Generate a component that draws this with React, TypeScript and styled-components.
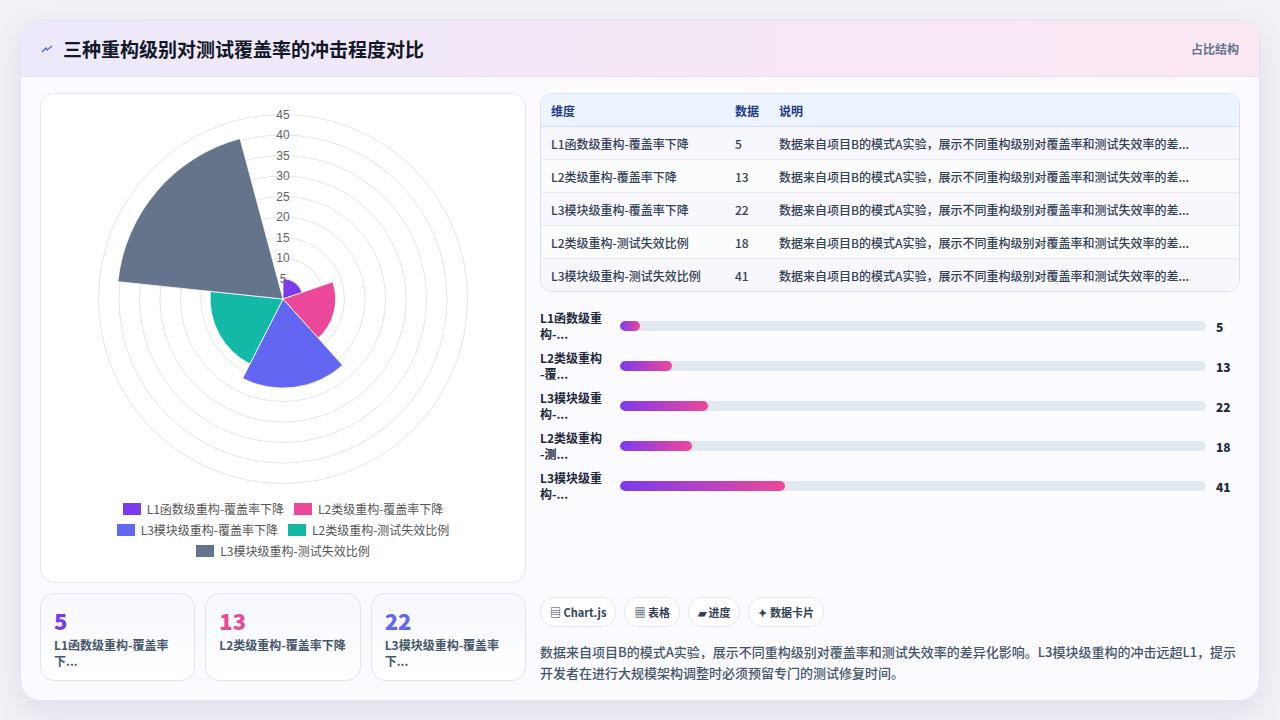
import React from "react";
import styled, {createGlobalStyle} from "styled-components";

const items = [
    {name: "L1函数级重构-覆盖率下降", short: "L1函数级重构-...", value: 5, color: "#7c3aed", from: -90, to: -19},
    {name: "L2类级重构-覆盖率下降", short: "L2类级重构-覆...", value: 13, color: "#ec4899", from: -19, to: 48},
    {name: "L3模块级重构-覆盖率下降", short: "L3模块级重构-...", value: 22, color: "#6366f1", from: 48, to: 117},
    {name: "L2类级重构-测试失效比例", short: "L2类级重构-测...", value: 18, color: "#14b8a6", from: 117, to: 186},
    {name: "L3模块级重构-测试失效比例", short: "L3模块级重构-...", value: 41, color: "#64748b", from: 186, to: 255},
];
const note = "数据来自项目B的模式A实验，展示不同重构级别对覆盖率和测试失效率的差...";

const GlobalStyle = createGlobalStyle`
    body {
        margin: 0;
        background: #f1f1f6;
        font-family: "Noto Sans CJK SC", "Noto Sans", sans-serif;
    }
`;

const Page = styled.div`
    width: 1280px;
    height: 720px;
    padding: 20px;
    box-sizing: border-box;
`;

const Card = styled.div`
    height: 679px;
    background: #fafaff;
    border: 1px solid #e4e2f3;
    border-radius: 20px;
    box-shadow: 0 10px 30px rgba(100, 100, 160, 0.12);
    overflow: hidden;
    display: flex;
    flex-direction: column;
`;

const Header = styled.div`
    height: 55px;
    flex: none;
    display: flex;
    align-items: center;
    justify-content: space-between;
    padding: 0 20px;
    background: linear-gradient(to right, #ede9fa, #fbe7f3);
    border-bottom: 1px solid #e7e3f5;
`;

const Title = styled.h1`
    margin: 0;
    font-size: 19px;
    font-weight: 700;
    color: #111827;
    display: flex;
    align-items: center;
    gap: 10px;
`;

const HeaderTag = styled.span`
    font-size: 12px;
    font-weight: 700;
    color: #64748b;
`;

const Body = styled.div`
    flex: 1;
    display: grid;
    grid-template-columns: 486px 1fr;
    gap: 14px;
    padding: 16px 19px 17px;
`;

const Column = styled.div`
    display: flex;
    flex-direction: column;
    gap: 10px;
    min-width: 0;
`;

const ChartBox = styled.div`
    height: 488px;
    background: #fff;
    border: 1px solid #e2e8f0;
    border-radius: 14px;
    display: flex;
    flex-direction: column;
    align-items: center;
`;

const Legend = styled.div`
    display: flex;
    flex-wrap: wrap;
    justify-content: center;
    gap: 4px 10px;
    width: 360px;
    margin-top: 6px;
`;

const LegendItem = styled.span`
    display: flex;
    align-items: center;
    gap: 6px;
    font-size: 12px;
    color: #555;
`;

const Swatch = styled.i<{c: string}>`
    width: 18px;
    height: 12px;
    background: ${({c}) => c};
`;

const Stats = styled.div`
    display: grid;
    grid-template-columns: repeat(3, 1fr);
    gap: 10px;
`;

const Stat = styled.div`
    height: 88px;
    box-sizing: border-box;
    padding: 12px 13px;
    border: 1px solid #dde6f2;
    border-radius: 14px;
    background: linear-gradient(to bottom, #f6f8fd, #fff);
`;

const StatValue = styled.div<{c: string}>`
    font-size: 22px;
    font-weight: 800;
    color: ${({c}) => c};
    line-height: 28px;
`;

const StatLabel = styled.div`
    font-size: 12px;
    font-weight: 700;
    color: #475569;
    line-height: 16px;
    margin-top: 3px;
`;

const Table = styled.table`
    width: 100%;
    border-collapse: separate;
    border-spacing: 0;
    border: 1px solid #d8e0ec;
    border-radius: 12px;
    overflow: hidden;
    font-size: 12px;
    background: #fff;
`;

const Th = styled.th`
    text-align: left;
    background: #eef4ff;
    color: #1e3a8a;
    font-weight: 700;
    height: 32px;
    padding: 0 10px;
    border-bottom: 1px solid #d8e0ec;
`;

const Td = styled.td<{odd: boolean}>`
    height: 32px;
    padding: 0 10px;
    color: #334155;
    font-weight: 500;
    background: ${({odd}) => odd ? "#f8f7fe" : "#fbfcfc"};
    border-bottom: 1px solid #e5e9f0;
    white-space: nowrap;
    tr:last-child & { border-bottom: none; }
`;

const Bars = styled.div`
    display: flex;
    flex-direction: column;
    margin-top: 4px;
`;

const BarRow = styled.div`
    height: 40px;
    display: grid;
    grid-template-columns: 80px 1fr 34px;
    align-items: center;
`;

const BarLabel = styled.div`
    font-size: 12px;
    font-weight: 700;
    color: #1e293b;
    line-height: 16px;
    width: 66px;
`;

const Track = styled.div`
    height: 10px;
    background: #e2e8f0;
    border-radius: 5px;
    overflow: hidden;
`;

const Fill = styled.div`
    height: 100%;
    border-radius: 5px;
    background: linear-gradient(to right, #7c3aed, #ec4899);
`;

const BarValue = styled.div`
    font-size: 12px;
    font-weight: 800;
    color: #1e293b;
    padding-left: 10px;
`;

const Tags = styled.div`
    display: flex;
    gap: 8px;
    margin-top: auto;
`;

const Tag = styled.span`
    font-size: 11px;
    font-weight: 700;
    color: #334155;
    padding: 6px 9px;
    border: 1px solid #e2e8f0;
    border-radius: 14px;
    background: #fff;
`;

const Desc = styled.p`
    margin: 4px 0 0;
    font-size: 13px;
    line-height: 21px;
    font-weight: 500;
    color: #475569;
`;

const rad = (a: number) => (a * Math.PI) / 180;

const PolarChart = () => {
    const cx = 243, cy = 205, k = 4.05, step = 20.5;
    return (
        <svg width="486" height="400" viewBox="0 0 486 400">
            {Array.from({length: 9}, (_, i) => (
                <circle key={i} cx={cx} cy={cy} r={step * (i + 1)} fill="none" stroke="#e5e5e5" strokeWidth="1"/>
            ))}
            {items.map(it => {
                const r = it.value * k;
                const x1 = cx + r * Math.cos(rad(it.from)), y1 = cy + r * Math.sin(rad(it.from));
                const x2 = cx + r * Math.cos(rad(it.to)), y2 = cy + r * Math.sin(rad(it.to));
                return <path key={it.name} d={`M${cx} ${cy}L${x1} ${y1}A${r} ${r} 0 0 1 ${x2} ${y2}Z`}
                    fill={it.color} stroke="#fff" strokeWidth="0.8"/>;
            })}
            {Array.from({length: 9}, (_, i) => (
                <text key={i} x={cx} y={cy - step * (i + 1) + 4} textAnchor="middle" fontSize="12"
                    fontFamily="Liberation Sans, sans-serif" fill="#666">{(i + 1) * 5}</text>
            ))}
        </svg>
    );
};

const App = () => (
    <Page>
        <GlobalStyle/>
        <Card>
            <Header>
                <Title>
                    <svg width="12" height="10" viewBox="0 0 12 10">
                        <path d="M1 8 L5 4 L6 6 L11 2" stroke="#4f6fd8" strokeWidth="1.4" fill="none"/>
                    </svg>
                    三种重构级别对测试覆盖率的冲击程度对比
                </Title>
                <HeaderTag>占比结构</HeaderTag>
            </Header>
            <Body>
                <Column>
                    <ChartBox>
                        <PolarChart/>
                        <Legend>
                            {items.map(it => (
                                <LegendItem key={it.name}><Swatch c={it.color}/>{it.name}</LegendItem>
                            ))}
                        </Legend>
                    </ChartBox>
                    <Stats>
                        <Stat><StatValue c="#7c3aed">5</StatValue><StatLabel>L1函数级重构-覆盖率<br/>下...</StatLabel></Stat>
                        <Stat><StatValue c="#ec4899">13</StatValue><StatLabel>L2类级重构-覆盖率下降</StatLabel></Stat>
                        <Stat><StatValue c="#6366f1">22</StatValue><StatLabel>L3模块级重构-覆盖率<br/>下...</StatLabel></Stat>
                    </Stats>
                </Column>
                <Column>
                    <Table>
                        <thead>
                            <tr><Th style={{width: 164}}>维度</Th><Th style={{width: 24}}>数据</Th><Th>说明</Th></tr>
                        </thead>
                        <tbody>
                            {items.map((it, i) => (
                                <tr key={it.name}>
                                    <Td odd={i % 2 === 0}>{it.name}</Td>
                                    <Td odd={i % 2 === 0}>{it.value}</Td>
                                    <Td odd={i % 2 === 0}>{note}</Td>
                                </tr>
                            ))}
                        </tbody>
                    </Table>
                    <Bars>
                        {items.map(it => (
                            <BarRow key={it.name}>
                                <BarLabel>{it.short.slice(0, 6)}<br/>{it.short.slice(6)}</BarLabel>
                                <Track><Fill style={{width: `${(it.value / 146) * 100}%`}}/></Track>
                                <BarValue>{it.value}</BarValue>
                            </BarRow>
                        ))}
                    </Bars>
                    <Tags>
                        <Tag>▤ Chart.js</Tag>
                        <Tag>▦ 表格</Tag>
                        <Tag>▰ 进度</Tag>
                        <Tag>✦ 数据卡片</Tag>
                    </Tags>
                    <Desc>数据来自项目B的模式A实验，展示不同重构级别对覆盖率和测试失效率的差异化影响。L3模块级重构的冲击远超L1，提示开发者在进行大规模架构调整时必须预留专门的测试修复时间。</Desc>
                </Column>
            </Body>
        </Card>
    </Page>
);

export default App;
